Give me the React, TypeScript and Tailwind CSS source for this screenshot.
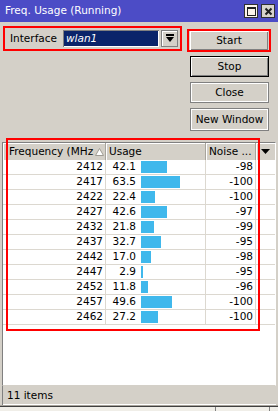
import React from "react";

type Row = { freq: number; usage: number; noise: number };

const rows: Row[] = [
  { freq: 2412, usage: 42.1, noise: -98 },
  { freq: 2417, usage: 63.5, noise: -100 },
  { freq: 2422, usage: 22.4, noise: -100 },
  { freq: 2427, usage: 42.6, noise: -97 },
  { freq: 2432, usage: 21.8, noise: -99 },
  { freq: 2437, usage: 32.7, noise: -95 },
  { freq: 2442, usage: 17.0, noise: -98 },
  { freq: 2447, usage: 2.9, noise: -95 },
  { freq: 2452, usage: 11.8, noise: -96 },
  { freq: 2457, usage: 49.6, noise: -100 },
  { freq: 2462, usage: 27.2, noise: -100 },
];

function WinButton({
  children,
  strong,
}: {
  children: React.ReactNode;
  strong?: boolean;
}) {
  return (
    <button
      type="button"
      className={
        strong
          ? "ml-[3px] flex h-[21px] w-[79px] items-center justify-center border border-black bg-[#d4d0c8] text-black shadow-[inset_1px_1px_0_#ffffff,inset_-1px_-1px_0_#808080]"
          : "ml-[3px] flex h-[21px] w-[79px] items-center justify-center border border-[#808080] bg-[#d4d0c8] text-black shadow-[inset_1px_1px_0_#ffffff,inset_-1px_-1px_0_#ffffff]"
      }
    >
      {children}
    </button>
  );
}

export default function App() {
  return (
    <div className="relative flex h-[411px] w-[278px] flex-col overflow-hidden bg-[#d4d0c8] font-['DejaVu_Sans',sans-serif] text-[10.5px] text-black">
      {/* title bar */}
      <div className="flex h-[22px] shrink-0 items-center bg-[#4c4cc6] pl-[5px] pr-[3px]">
        <span className="text-[10.5px] text-white">Freq. Usage (Running)</span>
        <div className="ml-auto flex gap-[3px]">
          <div className="flex h-[14px] w-[14px] items-center justify-center border border-[#303030] bg-[#fbf4ec]">
            <div className="h-[9px] w-[9px] border border-t-2 border-[#202020]" />
          </div>
          <div className="flex h-[14px] w-[14px] items-center justify-center border border-[#303030] bg-[#d8d4cc]">
            <svg width="9" height="9" viewBox="0 0 9 9">
              <path d="M1.5 1.5 L7.5 7.5 M7.5 1.5 L1.5 7.5" stroke="#202020" strokeWidth="2" />
            </svg>
          </div>
        </div>
      </div>

      {/* top area */}
      <div className="flex h-[120px] shrink-0">
        <div className="pl-[3px] pt-[4px]">
          <div className="flex h-[25px] w-[179px] items-center border-2 border-[#ff0000] pl-[5px]">
            <span>Interface</span>
            <div className="ml-[6px] flex h-[17px] w-[96px] items-center bg-[#0a246a] pl-[3px] shadow-[inset_1px_1px_0_#808080,inset_-1px_-1px_0_#ffffff]">
              <span className="italic text-white">wlan1</span>
            </div>
            <div className="ml-[2px] flex h-[17px] w-[17px] items-center justify-center border border-[#808080] bg-[#d4d0c8] shadow-[inset_1px_1px_0_#ffffff]">
              <svg width="8" height="9" viewBox="0 0 8 9">
                <rect x="0" y="0" width="8" height="2" fill="#000" />
                <path d="M0 3 H8 L4 8 Z" fill="#000" />
              </svg>
            </div>
          </div>
        </div>

        <div className="ml-[5px] flex flex-col pt-[7px]">
          <div className="flex h-[23px] w-[84px] items-center justify-center border-2 border-[#ff0000]">
            <button
              type="button"
              className="flex h-[19px] w-[78px] items-center justify-center bg-[#d4d0c8] shadow-[inset_1px_1px_0_#ffffff,inset_-1px_-1px_0_#808080]"
            >
              Start
            </button>
          </div>
          <div className="mt-[4px] flex flex-col gap-[5px]">
            <WinButton strong>Stop</WinButton>
            <WinButton>Close</WinButton>
            <button
              type="button"
              className="ml-[3px] flex h-[23px] w-[79px] items-center justify-center border border-[#808080] bg-[#d4d0c8] shadow-[inset_1px_1px_0_#ffffff,inset_-1px_-1px_0_#ffffff]"
            >
              New Window
            </button>
          </div>
        </div>
      </div>

      {/* table */}
      <div className="mx-[2px] flex flex-1 flex-col border border-[#808080] border-b-[#d4d0c8] border-r-[#ffffff] bg-white">
        <div className="flex h-[17px] shrink-0 bg-[#d4d0c8]">
          <div className="flex w-[103px] items-center border-r border-[#a8a49c] pl-[6px] shadow-[inset_1px_1px_0_#ffffff]">
            <span className="w-[85px] overflow-hidden whitespace-nowrap">Frequency (MHz</span>
            <svg width="9" height="8" viewBox="0 0 9 8" className="ml-[1px]">
              <path d="M4.5 0.5 L8.5 7.5 H0.5 Z" fill="#ffffff" stroke="#a09c94" strokeWidth="1" />
            </svg>
          </div>
          <div className="flex w-[100px] items-center border-r border-[#a8a49c] pl-[3px] shadow-[inset_1px_1px_0_#ffffff]">
            Usage
          </div>
          <div className="flex w-[50px] items-center border-r border-[#a8a49c] pl-[3px] shadow-[inset_1px_1px_0_#ffffff]">
            Noise ...
          </div>
          <div className="flex flex-1 items-center justify-center shadow-[inset_1px_1px_0_#ffffff]">
            <svg width="9" height="5" viewBox="0 0 9 5">
              <path d="M0 0 H9 L4.5 5 Z" fill="#000" />
            </svg>
          </div>
        </div>

        {rows.map((r) => (
          <div key={r.freq} className="flex h-[15px] shrink-0 border-b border-[#dcd8d0]">
            <div className="flex w-[103px] items-center justify-end border-r border-[#dcd8d0] pr-[2px]">
              {r.freq}
            </div>
            <div className="flex w-[100px] items-center border-r border-[#dcd8d0]">
              <span className="w-[30px] text-right">{r.usage.toFixed(1)}</span>
              <div
                className="ml-[5px] h-[12px] bg-[#40b8ec]"
                style={{ width: Math.round(r.usage * 0.615) }}
              />
            </div>
            <div className="flex w-[50px] items-center justify-end border-r border-[#dcd8d0] pr-[2px]">
              {r.noise}
            </div>
            <div className="flex-1" />
          </div>
        ))}
        <div className="flex-1" />
      </div>

      {/* status bar */}
      <div className="mx-[2px] flex h-[19px] shrink-0 items-center border-l border-[#808080] pl-[4px] shadow-[inset_0_-1px_0_#ffffff]">
        11 items
      </div>
      <div className="flex h-[6px] shrink-0 flex-col">
        <div className="h-[1px] bg-[#a8a49c]" />
        <div className="h-[1px] bg-[#404040]" />
        <div className="flex flex-1 bg-[#f0eee8]">
          <div className="w-[216px] border-r border-[#808080]" />
          <div className="w-[54px] border-r border-[#808080]" />
        </div>
      </div>

      {/* annotation box */}
      <div className="pointer-events-none absolute left-[6px] top-[138px] h-[193px] w-[254px] border-2 border-[#ff0000]" />
    </div>
  );
}
